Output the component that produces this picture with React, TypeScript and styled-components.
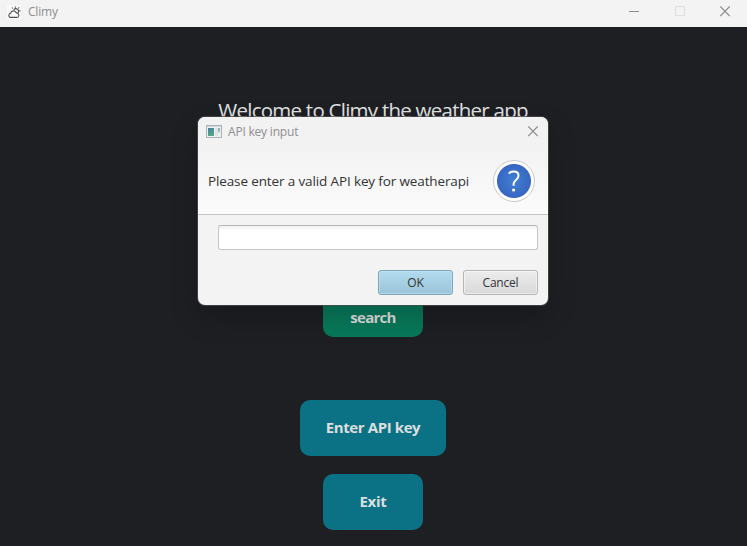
import React from "react";
import styled, { createGlobalStyle } from "styled-components";

const GlobalStyle = createGlobalStyle`
  * { box-sizing: border-box; }
  body { margin: 0; overflow: hidden; background: #1e1f23; }
  button, input { font-family: inherit; }
`;

const Window = styled.div`
  position: relative;
  display: flex;
  flex-direction: column;
  width: 747px;
  height: 546px;
  background: #1e1f23;
  font-family: "Open Sans", "Noto Sans", sans-serif;
`;

const TitleBar = styled.header`
  display: flex;
  align-items: center;
  flex: none;
  height: 27px;
  padding: 0 17px 4px 7px;
  background: #f3f3f3;
`;

const Caption = styled.span`
  flex: 1;
  font-size: 12px;
  line-height: 16px;
  letter-spacing: -0.2px;
  color: #8e8e8e;
  white-space: nowrap;
`;

const AppIcon = styled.svg`
  flex: none;
  width: 14px;
  height: 14px;
  margin-right: 7px;
  background: #fafafa;
`;

const WindowControls = styled.div`
  display: flex;
  align-items: center;
  gap: 35.5px;

  svg { display: block; }
`;

const Scene = styled.main`
  display: flex;
  flex: 1;
  flex-direction: column;
  align-items: center;
  padding-right: 1px;
`;

const Heading = styled.h1`
  margin: 72px 0 0;
  font-size: 20.5px;
  font-weight: 400;
  line-height: 22px;
  letter-spacing: -0.75px;
  color: #e0e1e2;
  white-space: nowrap;
`;

const SceneButton = styled.button<{
  $color: string;
  $width: number;
  $top: number;
  $drop?: number;
  $spacing: number;
}>`
  flex: none;
  width: ${(p) => p.$width}px;
  height: 56px;
  margin-top: ${(p) => p.$top}px;
  padding: ${(p) => p.$drop ?? 0}px 0 2px;
  border: 0;
  border-radius: 10px;
  background: ${(p) => p.$color};
  color: #dcdedf;
  font-size: 15px;
  font-weight: 700;
  line-height: 20px;
  letter-spacing: ${(p) => p.$spacing}px;
  white-space: nowrap;
`;

const Dialog = styled.section`
  position: absolute;
  top: 117px;
  left: 198px;
  width: 350px;
  height: 188px;
  border-radius: 7px;
  background: #f3f3f3;
  box-shadow: 0 0 0 1px rgba(75, 75, 78, 0.75), 0 12px 28px rgba(0, 0, 0, 0.22);
  overflow: hidden;
`;

const DialogHead = styled.div`
  display: flex;
  flex-direction: column;
  height: 98px;
  border-bottom: 1px solid #c4c4c4;
  background: linear-gradient(#f2f2f2 28%, #fbfbfb);
`;

const DialogTitle = styled.div`
  display: flex;
  align-items: center;
  height: 29px;
  padding: 0 10px 0 8px;
`;

const FormIcon = styled.svg`
  flex: none;
  margin: 0 6px 1px 0;
`;

const Message = styled.div`
  display: flex;
  align-items: center;
  justify-content: space-between;
  flex: 1;
  padding: 2px 13px 0 10px;
`;

const Prompt = styled.p`
  margin: 0;
  font-size: 13.5px;
  line-height: 18px;
  letter-spacing: -0.13px;
  color: #333;
  white-space: nowrap;
`;

const HelpBadge = styled.div`
  display: grid;
  place-items: center;
  width: 42px;
  height: 42px;
  border: 1px solid #cacaca;
  border-radius: 50%;
  background: radial-gradient(circle, #3f80d2 0, #3867c3 16.5px, #fff 17.5px);
`;

const DialogBody = styled.form`
  display: flex;
  flex-direction: column;
  gap: 20px;
  padding: 10px 10px 10px 20px;
`;

const KeyInput = styled.input`
  width: 100%;
  height: 25px;
  border: 1px solid #c6c6c6;
  border-top-color: #b6b6b6;
  border-radius: 3px;
  background: linear-gradient(#f2f2f2, #fff 5px);
  outline: none;
`;

const Actions = styled.div`
  display: flex;
  justify-content: flex-end;
  gap: 10px;
`;

const ActionButton = styled.button<{ $primary?: boolean }>`
  width: 75px;
  height: 25px;
  padding: 0;
  border: 1px solid ${(p) => (p.$primary ? "#7fa5b8" : "#b5b5b5")};
  border-radius: 3px;
  background: ${(p) => (p.$primary ? "linear-gradient(#b2dbef, #9bc4d8)" : "linear-gradient(#ececec, #d9d9d9)")};
  box-shadow: inset 0 0 0 1px ${(p) => (p.$primary ? "rgba(195, 230, 247, 0.5)" : "rgba(255, 255, 255, 0.5)")};
  color: #333;
  font-size: 12px;
  line-height: 16px;
  letter-spacing: -0.2px;
`;

const CloseGlyph = () => (
  <svg width="10" height="11" viewBox="0 0 10 11" fill="none" stroke="#8b8b8b" strokeWidth="1.1">
    <path d="M.3.5l9.4 9.6M9.7.5L.3 10.1" />
  </svg>
);

export default function App() {
  return (
    <Window>
      <GlobalStyle />
      <TitleBar>
        <AppIcon viewBox="0 0 14 14" fill="none" stroke="#505050" strokeWidth="1.1">
          <path d="M3 12.4h6.8a2 2 0 0 0 .7-3.9L7.4 6A3 3 0 0 0 3.6 8.3 2.2 2.2 0 0 0 3 12.4z" />
          <path d="M6.8 4.8a2.7 2.7 0 0 1 4.2 3.4M8.4 1.4v1.4M5.1 2.5l.9 1M12.2 2.4l-1 1.1M12.2 5.8h1.3" />
        </AppIcon>
        <Caption>Climy</Caption>
        <WindowControls>
          <svg width="10" height="11" viewBox="0 0 10 11"><path d="M0 5.5h10" stroke="#8b8b8b" /></svg>
          <svg width="10" height="11" viewBox="0 0 10 11"><rect x=".5" y=".5" width="9" height="9" fill="none" stroke="#dedede" /></svg>
          <CloseGlyph />
        </WindowControls>
      </TitleBar>
      <Scene>
        <Heading>Welcome to Climy the weather app</Heading>
        <SceneButton $color="#08795a" $width={100} $top={160} $drop={18} $spacing={-0.75}>search</SceneButton>
        <SceneButton $color="#0b7285" $width={146} $top={63} $spacing={-0.4}>Enter API key</SceneButton>
        <SceneButton $color="#0b7285" $width={100} $top={18} $spacing={-0.3}>Exit</SceneButton>
      </Scene>
      <Dialog>
        <DialogHead>
          <DialogTitle>
            <FormIcon width="16" height="13" viewBox="0 0 16 13">
              <defs>
                <linearGradient id="pane" x1="0" y1="0" x2="0.3" y2="1">
                  <stop offset="0" stopColor="#4680a4" />
                  <stop offset="1" stopColor="#55a783" />
                </linearGradient>
              </defs>
              <rect x=".5" y=".5" width="15" height="12" fill="#eef0f1" stroke="#adb2b6" />
              <path d="M1 1.5h14" stroke="#d2d7da" />
              <rect x="2" y="3" width="6" height="8" fill="url(#pane)" />
              <rect x="9" y="3" width="3" height="8" fill="#e2e2e2" />
              <rect x="12" y="3" width="2" height="3" fill="#8db2c2" />
              <rect x="12" y="6" width="2" height="2" fill="#b3d5bd" />
            </FormIcon>
            <Caption>API key input</Caption>
            <CloseGlyph />
          </DialogTitle>
          <Message>
            <Prompt>Please enter a valid API key for weatherapi</Prompt>
            <HelpBadge>
              <svg width="14" height="22" viewBox="0 0 14 22" fill="none" stroke="#fff">
                <path d="M2 3.8C2.6 2 4.3 1.6 6.6 1.6c3.1 0 4.9 1.5 4.9 4.1 0 4-4.9 4.5-4.9 8.4v1.7" strokeWidth="2" />
                <circle cx="6.6" cy="20" r="1.6" fill="#fff" stroke="none" />
              </svg>
            </HelpBadge>
          </Message>
        </DialogHead>
        <DialogBody onSubmit={(e: React.FormEvent) => e.preventDefault()}>
          <KeyInput aria-label="API key" />
          <Actions>
            <ActionButton $primary type="submit">OK</ActionButton>
            <ActionButton type="button">Cancel</ActionButton>
          </Actions>
        </DialogBody>
      </Dialog>
    </Window>
  );
}
